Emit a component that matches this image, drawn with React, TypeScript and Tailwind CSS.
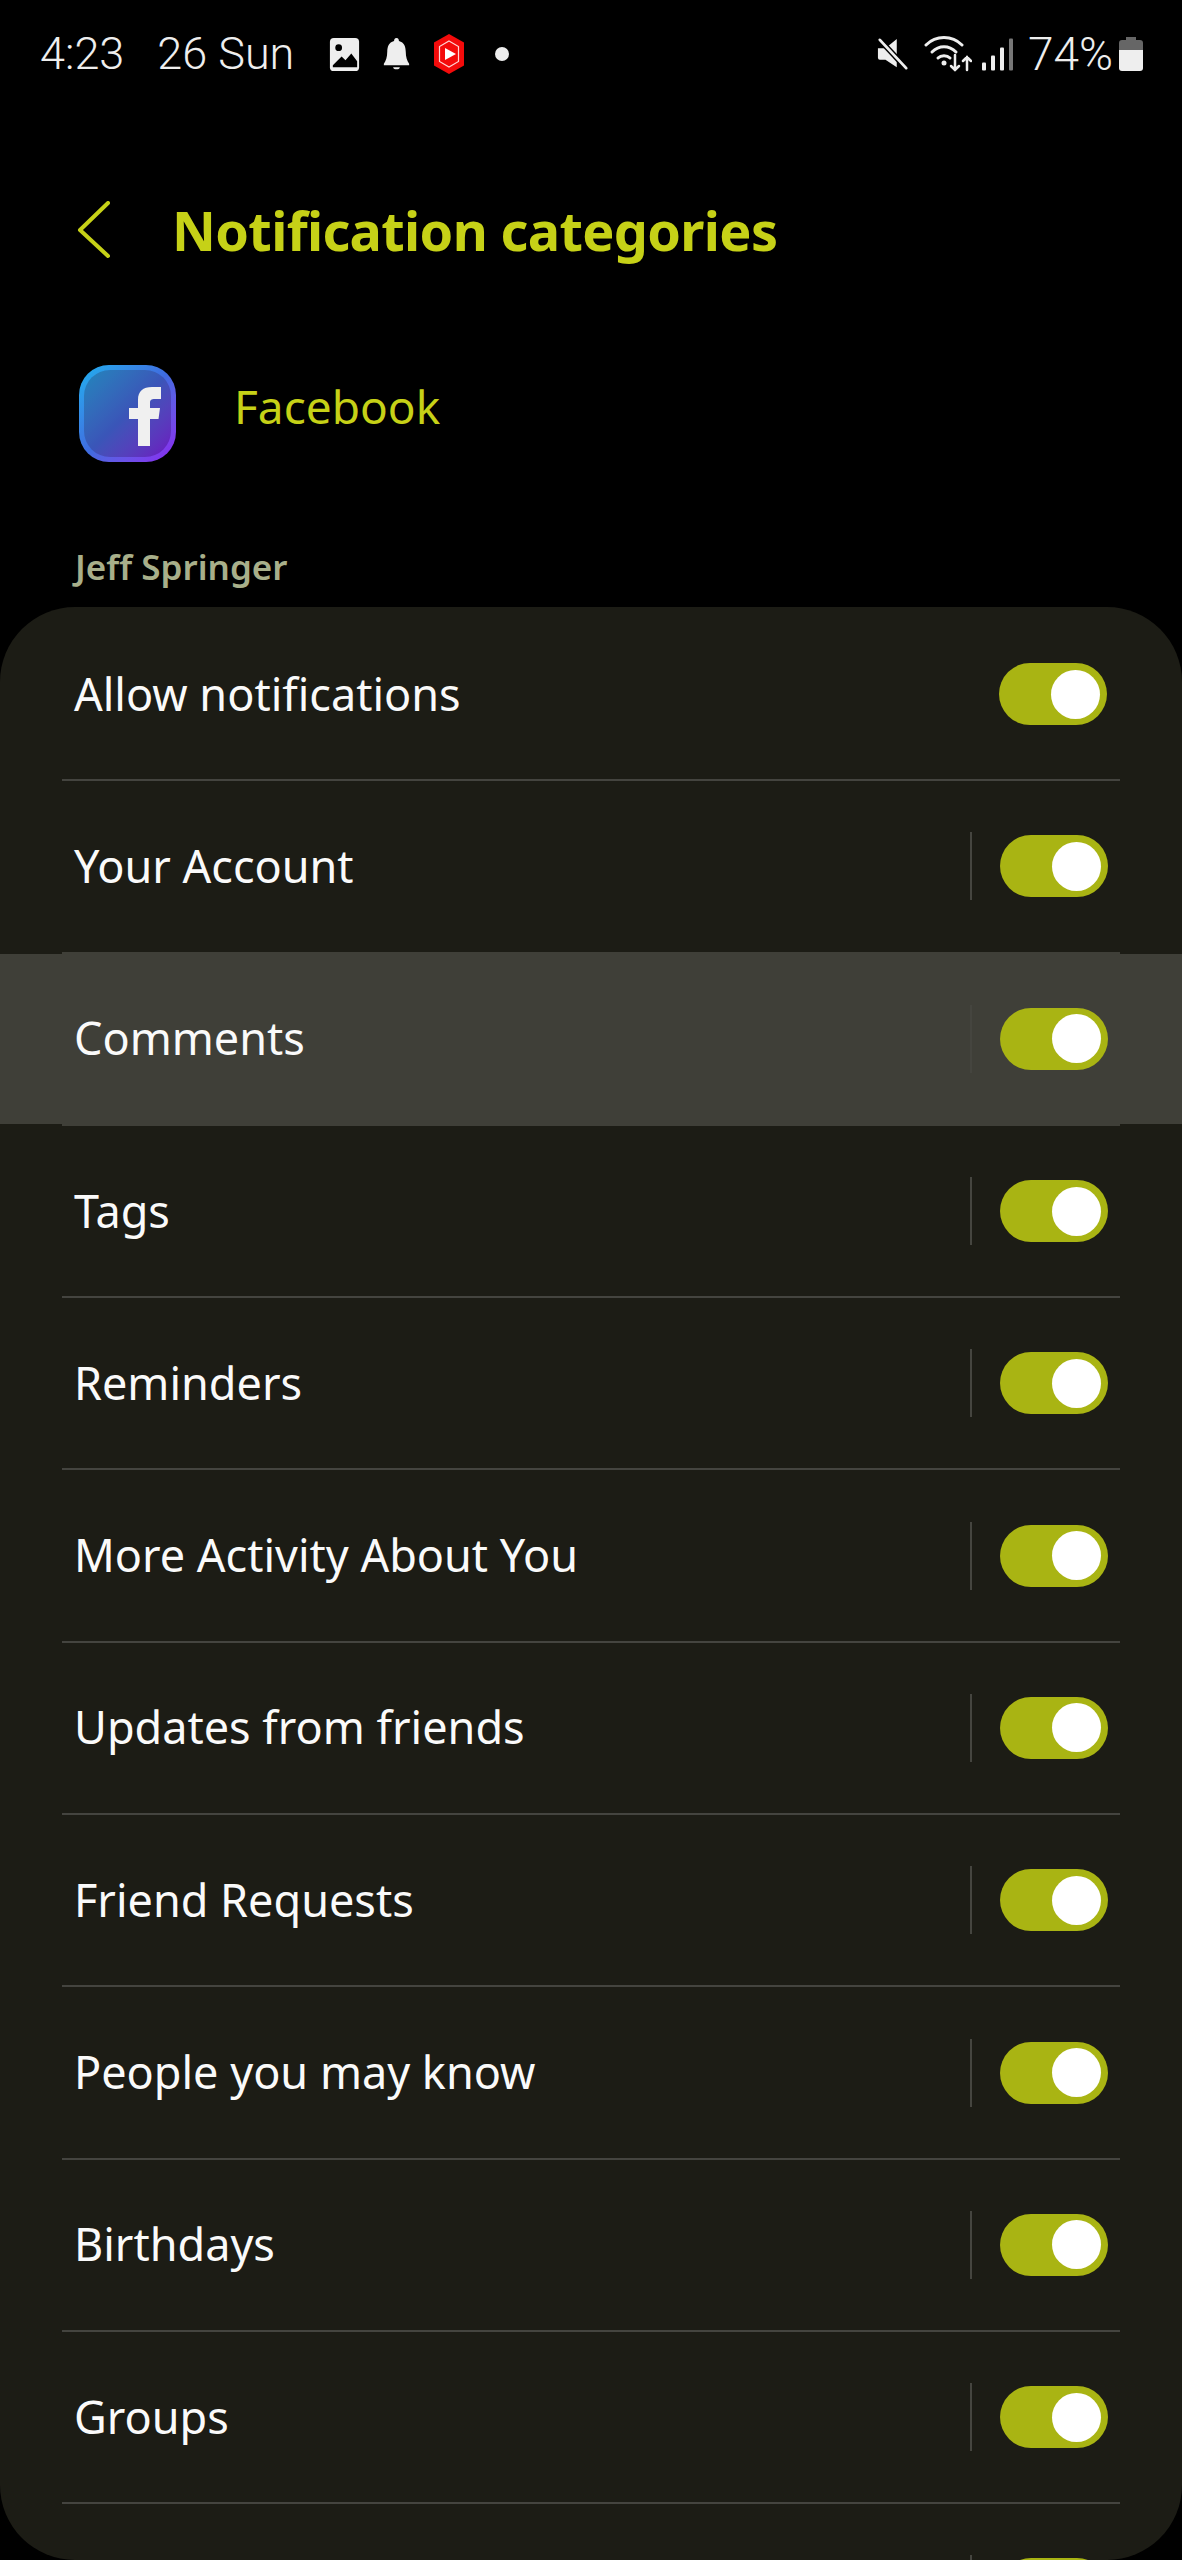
const rows = [
  'Your Account',
  'Comments',
  'Tags',
  'Reminders',
  'More Activity About You',
  'Updates from friends',
  'Friend Requests',
  'People you may know',
  'Birthdays',
  'Groups',
  '',
]

function Toggle({ shift }: { shift?: boolean }) {
  return (
    <div className={`flex h-[62px] w-[108px] items-center justify-end rounded-full bg-[#a9b413] pr-[7px] ${shift ? 'mr-[14px]' : 'mr-[15px]'}`}>
      <div className="h-[49px] w-[49px] rounded-full bg-white" />
    </div>
  )
}

function Row({ label, split, active }: { label: string; split?: boolean; active?: boolean }) {
  return (
    <div className={`flex h-[170.3px] shrink-0 items-center pl-[74px] pr-[60px] ${active ? 'bg-[#3f3f38]' : ''}`}>
      <span className="mb-[2px] flex-1 text-[45px] leading-none text-[#fafafa]">{label}</span>
      {split && <div className="mr-[28px] h-[68px] w-[2px] bg-[#45453f]" />}
      <Toggle shift={split} />
    </div>
  )
}

function Divider({ active }: { active?: boolean }) {
  return <div className={`mx-[62px] h-[2px] shrink-0 ${active ? 'bg-[#3f3f38]' : 'bg-[#44443f]'}`} />
}

function StatusBar() {
  return (
    <div className="flex h-[108px] items-center pl-[40px] pr-[39px] font-['Roboto',sans-serif] text-[45px] font-light text-[#eeeeee]">
      <span>4:23</span>
      <span className="ml-[33px]">26 Sun</span>
      <svg className="ml-[34px]" width="33" height="35" viewBox="0 0 32 36">
        <rect x="1" y="1" width="30" height="34" rx="4" fill="#eee" />
        <circle cx="10" cy="11" r="3.5" fill="#000" />
        <path d="M4 29 L13 20 L17 24 L23 17 L29 25 V31 H4 Z" fill="#000" />
      </svg>
      <svg className="ml-[21px]" width="29" height="35" viewBox="0 0 28 36">
        <path d="M14 1 C16 1 16.500 3 16.500 4 C22 5.500 23.500 10 23.500 15 C23.500 21 25 25 27 27.500 V29 H1 V27.500 C3 25 4.500 21 4.500 15 C4.500 10 6 5.500 11.500 4 C11.500 3 12 1 14 1 Z" fill="#eee" />
        <path d="M10.500 31 H17.500 C17 34 11 34 10.500 31 Z" fill="#eee" />
      </svg>
      <svg className="ml-[20px]" width="36" height="40" viewBox="0 0 32 40">
        <path d="M16 0 L31 8.500 V31.500 L16 40 L1 31.500 V8.500 Z" fill="#f40b0b" />
        <path d="M16 7 L25.500 12.500 V27.500 L16 33 L6.500 27.500 V12.500 Z" fill="none" stroke="#ffd5d5" strokeWidth="1.2" />
        <path d="M12 14 L23 20 L12 26 Z" fill="#fff" />
      </svg>
      <div className="ml-[28px] h-[14px] w-[14px] rounded-full bg-[#eee]" />
      <div className="flex-1" />
      <svg width="32" height="34" viewBox="0 0 34 36">
        <path d="M1 12 H9 L21 2 V32 L9 24 H3 Q1 24 1 22 Z" fill="#eee" />
        <path d="M3 3 L31 33" stroke="#000" strokeWidth="6" />
        <path d="M3 3 L31 33" stroke="#eee" strokeWidth="3" strokeLinecap="round" />
      </svg>
      <svg className="ml-[15px]" width="48" height="38" viewBox="0 0 48 38" fill="none" stroke="#eee" strokeLinecap="round">
        <path d="M2 10 C12 0 28 0 38 10" strokeWidth="3" />
        <path d="M8 17 C15 10 25 10 32 17" strokeWidth="3" />
        <path d="M14 23 C17 20 23 20 26 23" strokeWidth="3" />
        <circle cx="20" cy="28" r="2.500" fill="#eee" stroke="none" />
        <path d="M31 20 V35 M27 31 L31 35 L35 31" strokeWidth="2.500" />
        <path d="M43 35 V22 M39 26 L43 22 L47 26" strokeWidth="2.500" />
      </svg>
      <svg className="ml-[10px]" width="31" height="33" viewBox="0 0 31 32">
        <rect x="0" y="24" width="4" height="8" rx="1" fill="#eee" />
        <rect x="9" y="17" width="4" height="15" rx="1" fill="#eee" />
        <rect x="18" y="9" width="4" height="23" rx="1" fill="#eee" />
        <rect x="27" y="0" width="4" height="32" rx="1" fill="#777" />
      </svg>
      <span className="ml-[15px] text-[46px]">74%</span>
      <svg className="ml-[6px]" width="24" height="34" viewBox="0 0 24 34">
        <path d="M7 0 H17 V3 H21 Q24 3 24 6 V13 H0 V6 Q0 3 3 3 H7 Z" fill="#666" />
        <path d="M0 13 H24 V31 Q24 34 21 34 H3 Q0 34 0 31 Z" fill="#eee" />
      </svg>
    </div>
  )
}

export default function App() {
  return (
    <div className="flex h-[2560px] w-[1182px] flex-col overflow-hidden bg-black font-['Noto_Sans',sans-serif]">
      <StatusBar />

      <div className="mt-[92px] flex h-[60px] items-center pl-[77px]">
        <svg width="34" height="58" viewBox="0 0 34 58" fill="none" stroke="#c6d117" strokeWidth="4" strokeLinecap="round" strokeLinejoin="round">
          <path d="M31 2 L3 29 L31 55" />
        </svg>
        <h1 className="ml-[61px] text-[54px] font-bold leading-none tracking-[-0.65px] text-[#c6d117]">Notification categories</h1>
      </div>

      <div className="mt-[105px] flex h-[97px] items-center pl-[79px]">
        <div className="h-[97px] w-[97px] rounded-[30px] bg-gradient-to-br from-[#19b0ee] via-[#3f6be0] to-[#8a1cf0] p-[5px]">
          <div className="flex h-full w-full items-start rounded-[26px] bg-gradient-to-br from-[#1f86bc] via-[#3a55b8] to-[#6a10c0] pl-[45px] pt-[17px]">
            <svg width="32" height="59" viewBox="0 0 32 59">
              <path d="M9 59 V32 H0 V21 H9 V13 C9 4 14 0 23 0 H32 V12 H26 C22 12 21 13 21 16 V21 H31 L29.500 32 H21 V59 Z" fill="#f0f0f0" />
            </svg>
          </div>
        </div>
        <span className="mb-[16px] ml-[58px] text-[46px] leading-none text-[#c6d117]">Facebook</span>
      </div>

      <div className="mt-[87px] flex h-[36px] items-center pl-[75px] text-[35px] font-semibold text-[#a8af8a]">Jeff Springer</div>

      <div className="mt-[22px] flex min-h-0 flex-1 flex-col overflow-hidden rounded-[75px] bg-[#1c1c15] pt-[2px]">
        <Row label="Allow notifications" />
        <Divider />
        {rows.map((r, i) => (
          <div key={i} className="contents">
            <Row label={r} split active={r === 'Comments'} />
            {i < rows.length - 1 && <Divider active={r === 'Your Account' || r === 'Comments'} />}
          </div>
        ))}
      </div>
    </div>
  )
}
